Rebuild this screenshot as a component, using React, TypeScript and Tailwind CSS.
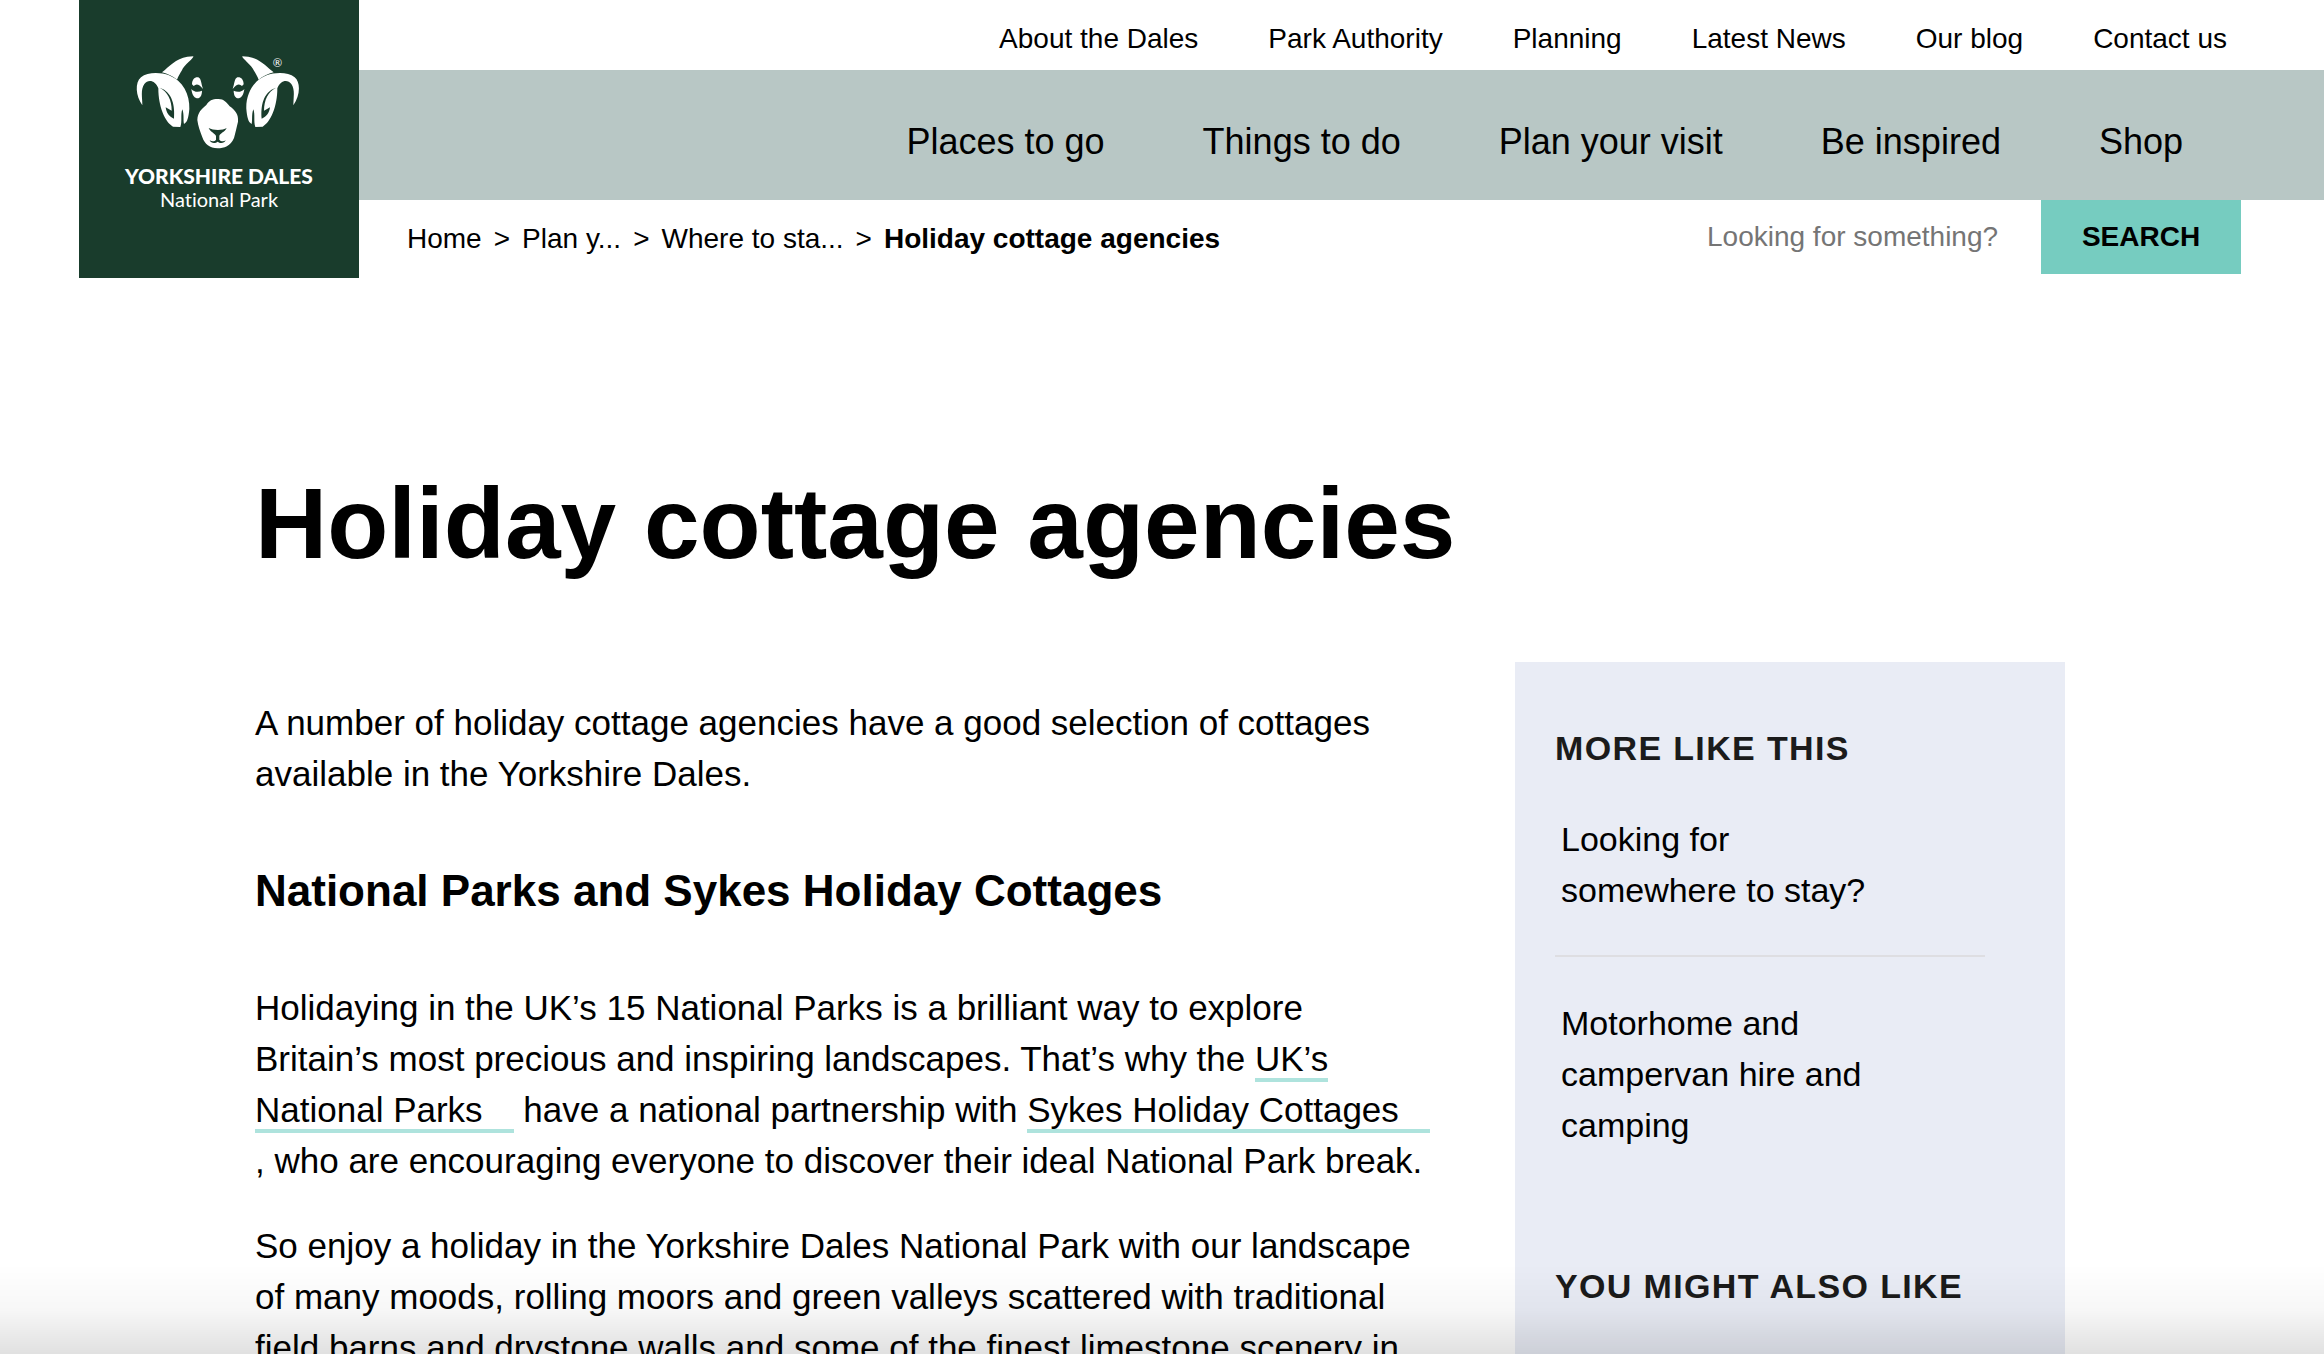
import { ReactNode } from "react"

const topLinks = ["About the Dales", "Park Authority", "Planning", "Latest News", "Our blog", "Contact us"]
const mainLinks = ["Places to go", "Things to do", "Plan your visit", "Be inspired", "Shop"]
const crumbs = ["Home", "Plan y...", "Where to sta..."]
const moreLinks = ["Looking for somewhere to stay?", "Motorhome and campervan hire and camping"]

function RamHalf() {
  return (
    <>
      <path fill="#fff" d="M129 97C150 80 170 56 205 50L223 49C226 54 196 74 188 92C184 98 178 108 174 119C162 108 146 102 129 97Z" />
      <path
        fill="#fff"
        d="M70 196C50 168 47 128 66 112C86 95 126 97 150 106C192 122 213 165 211 207C209 230 206 246 195 252C192 240 196 224 190 208C184 224 190 245 184 261L162 260C138 246 118 200 118 145C110 122 88 116 76 132C64 150 70 172 70 196Z"
      />
      <path fill="#193c2c" d="M122 143C146 155 158 180 158 212L140 202C142 218 150 230 165 236C168 200 162 156 122 143Z" />
      <path fill="#fff" d="M219 133C219 118 228 110 238 112C247 116 246 130 252 147C240 132 232 130 224 138Z" />
      <path fill="#fff" d="M217 147C224 156 238 158 249 152C249 168 242 176 233 175C224 172 219 162 217 147Z" />
    </>
  )
}

function Logo() {
  return (
    <a
      href="#"
      aria-label="Yorkshire Dales National Park"
      className="flex h-[278px] w-[280px] shrink-0 flex-col items-center bg-[#193c2c] pt-10 font-[Lato,sans-serif] text-white [font-variant-ligatures:none]"
    >
      <svg viewBox="0 0 600 360" className="h-[120px] w-[200px]">
        <RamHalf />
        <g transform="translate(593 0) scale(-1 1)">
          <RamHalf />
        </g>
        <path
          fill="#fff"
          d="M296 177C314 176 322 186 332 199C350 212 359 224 357 245C353 262 350 276 345 294C335 318 315 325 296 325C272 325 257 312 250 292C243 272 237 258 235 240C236 216 248 208 262 195C270 182 280 177 296 177Z"
        />
        <path
          fill="#193c2c"
          d="M269 264C282 272 312 272 323 264C317 277 302 280 301 288L301 299C306 305 314 305 320 301C316 311 302 310 296 305C290 310 276 311 272 301C279 305 287 305 291 299L291 288C288 280 275 277 269 264Z"
        />
        <text x="461" y="81" fill="#fff" fontSize="34">®</text>
      </svg>
      <span className="mt-1 text-[21px] leading-[24px] font-black">YORKSHIRE DALES</span>
      <span className="text-[20px] leading-[22px]">National Park</span>
    </a>
  )
}

function Header() {
  return (
    <header className="flex pl-[79px]">
      <Logo />
      <div className="flex-1">
        <nav aria-label="Secondary" className="flex h-[70px] items-center justify-end gap-[70px] pt-2 pr-[97px]">
          {topLinks.map((link) => (
            <a key={link} href="#">{link}</a>
          ))}
        </nav>
        <nav aria-label="Main" className="flex h-[130px] items-center justify-end gap-[98px] bg-[#b8c7c5] pt-3.5 pr-[141px] text-[36px]">
          {mainLinks.map((link) => (
            <a key={link} href="#">{link}</a>
          ))}
        </nav>
        <div className="flex h-[74px] justify-between pr-[83px] pl-12">
          <nav aria-label="Breadcrumb" className="flex items-center gap-3 pt-1">
            {crumbs.map((crumb) => (
              <span key={crumb} className="flex gap-3">
                <a href="#">{crumb}</a>
                <span>&gt;</span>
              </span>
            ))}
            <span className="font-bold">Holiday cottage agencies</span>
          </nav>
          <form className="flex">
            <input
              type="search"
              aria-label="Search"
              placeholder="Looking for something?"
              className="w-[334px] bg-transparent outline-none placeholder:text-[#757575]"
            />
            <button type="button" className="w-[200px] bg-[#76ccc0] font-bold">SEARCH</button>
          </form>
        </div>
      </div>
    </header>
  )
}

function ExternalLink({ children }: { children: ReactNode }) {
  return (
    <>
      <a href="#" className="border-b-4 border-[#aee3dd]">
        {children}
        <span className="inline-block w-[31px]" />
      </a>
      <wbr />
    </>
  )
}

function SideHeading({ children }: { children: ReactNode }) {
  return <h2 className="font-bold tracking-[0.04em] text-[#1b1b1b] uppercase">{children}</h2>
}

export default function App() {
  return (
    <div className="h-screen overflow-hidden bg-white font-['Helvetica_Neue','Liberation_Sans',Arial,sans-serif] text-[28px] leading-[32px] text-black">
      <Header />

      <div className="pr-1">
        <main className="mx-auto max-w-[1810px] pt-[195px] text-[34px] leading-[51px]">
          <h1 className="text-[100px] leading-[100px] font-bold">Holiday cottage agencies</h1>

          <div className="mt-[89px] flex items-start justify-between">
            <article className="w-[1176px] pt-[35px] text-[35px] leading-[51px]">
              <p>A number of holiday cottage agencies have a good selection of cottages available in the Yorkshire Dales.</p>
              <h2 className="my-16 text-[44px] leading-[55px] font-bold">National Parks and Sykes Holiday Cottages</h2>
              <p>
                Holidaying in the UK’s 15 National Parks is a brilliant way to explore Britain’s most precious and
                inspiring landscapes. That’s why the <ExternalLink>UK’s National Parks</ExternalLink> have a national
                partnership with <ExternalLink>Sykes Holiday Cottages</ExternalLink>, who are encouraging everyone to
                discover their ideal National Park break.
              </p>
              <p className="mt-[34px]">
                So enjoy a holiday in the Yorkshire Dales National Park with our landscape of many moods, rolling moors
                and green valleys scattered with traditional field barns and drystone walls and some of the finest
                limestone scenery in
              </p>
            </article>

            <aside className="w-[550px] bg-[#e9ecf5] pt-[61px] pr-20 pb-16 pl-10">
              <SideHeading>More like this</SideHeading>
              <ul className="mt-10 mb-[110px]">
                {moreLinks.map((link) => (
                  <li key={link} className="border-[#dedee2] pr-24 pl-[6px] not-first:pt-[41px] not-last:border-b-2 not-last:pb-[39px]">
                    <a href="#">{link}</a>
                  </li>
                ))}
              </ul>
              <SideHeading>You might also like</SideHeading>
            </aside>
          </div>
        </main>
      </div>

      {/* shade along the bottom edge of the window */}
      <div className="pointer-events-none fixed inset-x-0 bottom-0 h-[90px] bg-linear-to-b from-transparent via-black/3 to-black/12" />
    </div>
  )
}
